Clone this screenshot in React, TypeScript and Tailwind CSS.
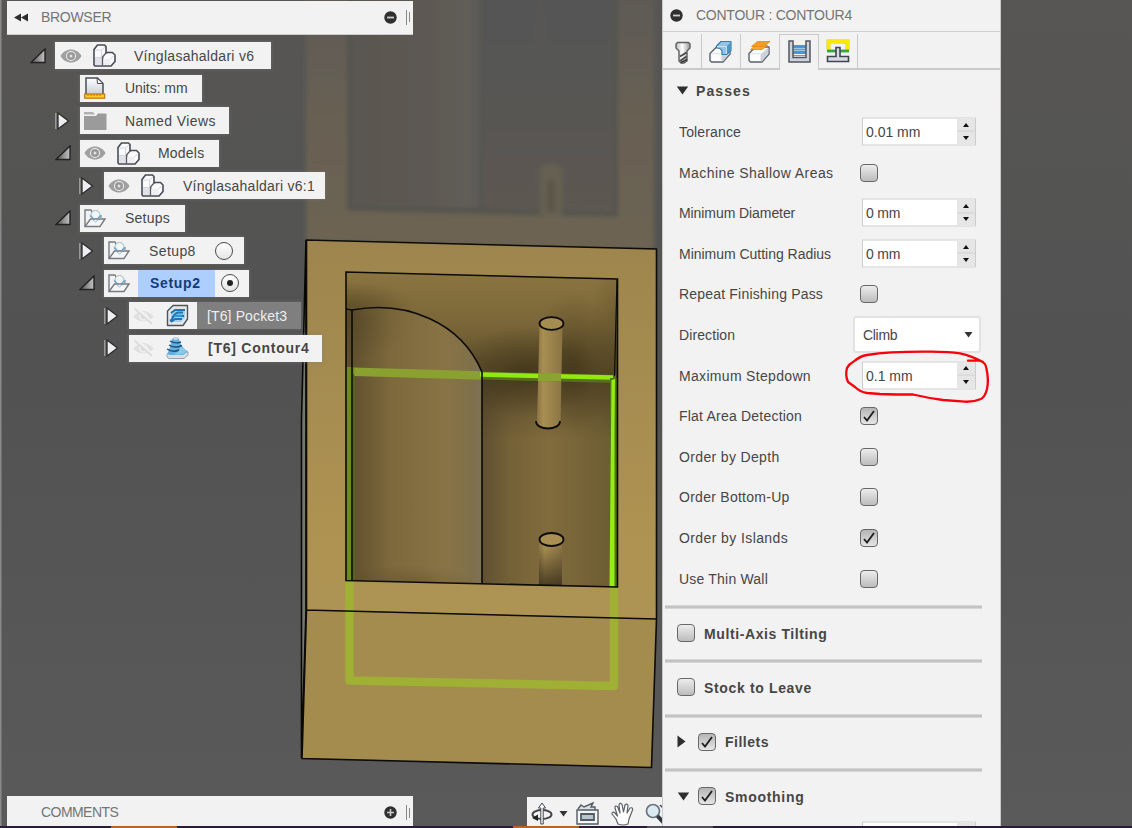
import React from "react";

/* ---------- small icons ---------- */

function Eye({ off = false }: { off?: boolean }) {
  if (off) {
    return (
      <svg width="23" height="20" viewBox="0 0 23 20" fill="none" stroke="#dcdcdc">
        <path d="M2 10.5C6 4.500 16 4 21 10.5C17 16 7 16.500 2 10.500Z" fill="#e0e0e0" strokeWidth="1" />
        <circle cx="11.500" cy="10.500" r="3.500" fill="#dcdcdc" stroke="#f2f2f2" strokeWidth="1.500" />
        <path d="M4 2L21 17" stroke="#f2f2f2" strokeWidth="3" />
        <path d="M2.500 2.500L20 18" strokeWidth="2" />
      </svg>
    );
  }
  return (
    <svg width="22" height="16" viewBox="0 0 22 16">
      <path d="M.5 8C5 -.700 17 -.700 21.500 8C17 16.700 5 16.700 .5 8Z" fill="#a0a0a0" />
      <circle cx="11" cy="8" r="5" fill="#f2f2f2" />
      <circle cx="11" cy="8" r="4" fill="#989898" />
      <circle cx="11" cy="8" r="1.500" fill="#e0e0e0" />
    </svg>
  );
}

function Body() {
  return (
    <svg width="23" height="23" viewBox="0 0 23 23" strokeLinejoin="round">
      <path d="M1 5.500L4.500 1H11.500L13 2.500V9L14.500 8.500H19.500L22 11V17.500L18 22H2L1 21Z" fill="#fbfbfd" stroke="#484b54" strokeWidth="1.600" />
      <path d="M2 14H9V21H2Z" fill="#e2e3ea" />
      <path d="M10.500 15H17.500V21H10.500Z" fill="#eeeef3" />
      <path d="M2 6H8.500V13.500H2M8.500 6L12 3M17.500 15L21 11.500" fill="none" stroke="#d4d6de" />
      <path d="M13 9L9.500 13V21.500M9.500 14H10.500" fill="none" stroke="#5a5d66" strokeWidth="1.300" />
    </svg>
  );
}

function UnitsDoc() {
  return (
    <svg width="22" height="22" viewBox="0 0 22 22">
      <defs>
        <linearGradient id="doc" x1="0" y1="0" x2="0" y2="1">
          <stop offset="0" stopColor="#fff" />
          <stop offset="1" stopColor="#cdd0da" />
        </linearGradient>
      </defs>
      <path d="M2 17V1H13.500L19 6.500V17" fill="url(#doc)" stroke="#4b4e58" strokeWidth="1.500" />
      <path d="M13 1L13.500 6.500H19Z" fill="#fff" stroke="#4b4e58" />
      <rect x=".7" y="17" width="20" height="4.200" fill="#f9c92e" stroke="#c07a08" strokeWidth="1.200" />
      <path d="M4 17V19M7 17V19M10 17V19M13 17V19M16 17V19" stroke="#c07a08" />
    </svg>
  );
}

function GrayFolder() {
  return (
    <svg width="23" height="18" viewBox="0 0 23 18" fill="#9b9b9b">
      <path d="M0 0H9L11 2.500H0Z" fill="#b1b1b1" />
      <path d="M0 4H12L14 1.500H22.500V18H0Z" />
    </svg>
  );
}

function SetupFolder() {
  return (
    <svg width="22" height="19" viewBox="0 0 22 19" fill="none">
      <path d="M1 17V1H7L8 3" stroke="#777b80" strokeWidth="1.400" />
      <path d="M17 6V9" stroke="#777b80" />
      <circle cx="11.500" cy="6" r="4.500" fill="#f1f6f9" stroke="#a3b3bd" />
      <path d="M6 6.500L9 9M17 6.500L14 9" stroke="#64a9d4" strokeWidth="1.600" />
      <path d="M1 17.500L6.500 10H21L16 17.500Z" fill="#f6f6f6" stroke="#777b80" strokeWidth="1.400" />
      <path d="M9 11L11.500 13L14 11" stroke="#8cc0df" />
    </svg>
  );
}

function PocketIcon() {
  return (
    <svg width="23" height="23" viewBox="0 0 23 23" strokeLinejoin="round">
      <path d="M1.500 7L7 1.500H21.500V15L17 21.500H1.500Z" fill="#e4e6e9" stroke="#4c535b" strokeWidth="1.400" />
      <path d="M5 18V9L9 5H19V14L15 18Z" fill="#a9cfe8" />
      <path d="M5 9L9 6H19M4 17C8 15 7 9 12 8.500H17M6 13L9 12H18M5 18L9 15H16" fill="none" stroke="#1f75b3" strokeWidth="2" />
      <path d="M9 10.500H17L15 13H8Z" fill="#3a97d1" />
    </svg>
  );
}

function ContourIcon() {
  return (
    <svg width="23" height="22" viewBox="0 0 23 22">
      <path d="M1 17L5 14H17L22 15V18L18 21.500H3L1 20Z" fill="#dcdee0" stroke="#9fa2a6" />
      <path d="M1.500 16C4 12 5 5 6 2Q9.500 -.8 13 2C14 6 15 10 22 14.500L17 18H3Z" fill="#62afe0" />
      <path d="M14 9L21 14L17 17Q11 18 8 17Q14 15 14 9Z" fill="#8cc8ea" />
      <path d="M4 4C8 6.500 11 6.500 15 5M3 8C7 10.500 12 10.500 16 8.500M1 12C5 14.500 10 14.500 13 13" fill="none" stroke="#1f4f74" strokeWidth="1.400" />
      <path d="M7.500 2H11.500" stroke="#d3dde3" strokeWidth="1.800" />
    </svg>
  );
}

function Twisty({ open }: { open: boolean }) {
  return open ? (
    <svg width="16" height="16" viewBox="0 0 16 16">
      <defs>
        <linearGradient id="tw" x1="0" x2="1">
          <stop offset="0" stopColor="#555" />
          <stop offset="1" stopColor="#c4c4c4" />
        </linearGradient>
      </defs>
      <path d="M1 14.500L15 1V14.500Z" fill="url(#tw)" stroke="#222" strokeWidth="1.400" />
    </svg>
  ) : (
    <svg width="16" height="20" viewBox="0 0 16 20">
      <path d="M.8 2V18" stroke="#aaa" strokeWidth="1.200" />
      <path d="M3 2L13.500 10L3 18Z" fill="#eeeef2" stroke="#2c2c2c" strokeWidth="1.300" />
    </svg>
  );
}

function Radio({ on }: { on?: boolean }) {
  return (
    <span className="flex size-[18px] items-center justify-center rounded-full border-[1.5px] border-[#4a4a4a] bg-linear-to-b from-white to-[#e6e6e6]">
      {on && <span className="size-[6px] rounded-full bg-[#222]" />}
    </span>
  );
}

function Round({ plus }: { plus?: boolean }) {
  return (
    <svg width="13" height="13" viewBox="0 0 13 13">
      <circle cx="6.500" cy="6.500" r="6.200" fill="#303030" />
      <path d={plus ? "M3 6.500H10M6.500 3V10" : "M3 6.500H10"} stroke="#ccc" strokeWidth={plus ? 1.6 : 1.8} />
    </svg>
  );
}

/* ---------- tree ---------- */

function Row({ open, pad, width, children }: { open?: boolean; pad: string; width: string; children: React.ReactNode }) {
  return (
    <div className={`flex h-[32.5px] items-center ${pad}`}>
      <span className="flex w-[25px] shrink-0">{open !== undefined && <Twisty open={open} />}</span>
      <div className={`flex h-[27px] items-center bg-[#f2f2f2] shadow-[0_0_3px_1px_rgba(125,125,125,0.35)] ${width}`}>{children}</div>
    </div>
  );
}

function Slot({ w, children }: { w: string; children: React.ReactNode }) {
  return <span className={`flex shrink-0 ${w}`}>{children}</span>;
}

function Tree() {
  return (
    <div className="mt-[5px] flex flex-col whitespace-nowrap text-[14px] leading-none text-[#464646]">
      <Row open pad="pl-[23px]" width="w-[216px] pl-[5px]">
        <Slot w="w-[33px]"><Eye /></Slot>
        <Slot w="w-[41px]"><Body /></Slot>
        <span className="tracking-[0.28px]">Vínglasahaldari v6</span>
      </Row>
      <Row pad="pl-[48px]" width="w-[122px] pl-[4px]">
        <Slot w="w-[41px]"><UnitsDoc /></Slot>
        <span className="tracking-[-0.05px]">Units: mm</span>
      </Row>
      <Row open={false} pad="pl-[48px]" width="w-[149px] pl-[4px]">
        <Slot w="w-[41px]"><GrayFolder /></Slot>
        <span className="tracking-[0.45px]">Named Views</span>
      </Row>
      <Row open pad="pl-[48px]" width="w-[139px] pl-[4px]">
        <Slot w="w-[33px]"><Eye /></Slot>
        <Slot w="w-[41px]"><Body /></Slot>
        <span className="tracking-[0.2px]">Models</span>
      </Row>
      <Row open={false} pad="pl-[72px]" width="w-[221px] pl-[4px]">
        <Slot w="w-[33px]"><Eye /></Slot>
        <Slot w="w-[42px]"><Body /></Slot>
        <span className="tracking-[0.26px]">Vínglasahaldari v6:1</span>
      </Row>
      <Row open pad="pl-[48px]" width="w-[105px] pl-[4px]">
        <Slot w="w-[41px]"><SetupFolder /></Slot>
        <span className="tracking-[0.25px]">Setups</span>
      </Row>
      <Row open={false} pad="pl-[72px]" width="w-[140px] pl-[4px]">
        <Slot w="w-[41px]"><SetupFolder /></Slot>
        <span className="w-[66px] tracking-[0.4px]">Setup8</span>
        <Radio />
      </Row>
      <Row open pad="pl-[72px]" width="w-[145px] pl-[4px]">
        <Slot w="w-[30px]"><SetupFolder /></Slot>
        <span className="mr-[6px] flex h-full w-[77px] items-center bg-[#accfff] pl-[12px] font-bold tracking-[0.65px] text-[#123c7c]">Setup2</span>
        <Radio on />
      </Row>
      <Row open={false} pad="pl-[97px]" width="w-[172px] pl-[3px]">
        <Slot w="w-[34px]"><Eye off /></Slot>
        <Slot w="w-[31px]"><PocketIcon /></Slot>
        <span className="flex h-full flex-1 items-center bg-[#7f7f7f] pl-[10px] tracking-[0.13px] text-[#eee]">[T6] Pocket3</span>
      </Row>
      <Row open={false} pad="pl-[97px]" width="w-[193px] pl-[3px]">
        <Slot w="w-[34px]"><Eye off /></Slot>
        <Slot w="w-[42px]"><ContourIcon /></Slot>
        <span className="font-bold tracking-[0.75px]">[T6] Contour4</span>
      </Row>
    </div>
  );
}

/* ---------- dialog controls ---------- */

function Check({ on }: { on?: boolean }) {
  return (
    <span
      className={`flex h-[18px] w-[18px] shrink-0 items-center justify-center rounded-[4px] border-[1.5px] border-[#686868] bg-linear-to-b ${
        on ? "from-[#b5b5b5] to-[#e6e6e6]" : "from-[#ededed] to-[#bcbcbc]"
      }`}
    >
      {on && (
        <svg width="14" height="14" viewBox="0 0 14 14" fill="none" stroke="#1c1c1c" strokeWidth="1.800">
          <path d="M2 8L5 11.500L12 2" />
        </svg>
      )}
    </span>
  );
}

function Spin({ value, track }: { value: string; track: string }) {
  return (
    <div className="ml-[2px] flex h-[28px] w-[114px] -translate-y-[0.5px] border border-[#cdcdcd] bg-white">
      <span className={`flex flex-1 items-center pl-[3px] ${track}`}>{value}</span>
      <span className="flex w-[18px] flex-col bg-[#e6e6e6]">
        <span className="flex flex-1 items-center justify-center border-b border-[#d2d2d2]">
          <svg width="6" height="5" viewBox="0 0 6 5"><path d="M0 4.500L3 .5L6 4.500Z" fill="#111" /></svg>
        </span>
        <span className="flex flex-1 items-center justify-center">
          <svg width="6" height="5" viewBox="0 0 6 5"><path d="M0 .5L3 4.500L6 .5Z" fill="#111" /></svg>
        </span>
      </span>
    </div>
  );
}

type Param = { label: string; track: string; value?: string; vtrack?: string; on?: boolean; select?: string };

const params: Param[] = [
  { label: "Tolerance", track: "tracking-[0.15px]", value: "0.01 mm", vtrack: "tracking-[-0.02px]" },
  { label: "Machine Shallow Areas", track: "tracking-[0.43px]" },
  { label: "Minimum Diameter", track: "tracking-[-0.08px]", value: "0 mm", vtrack: "tracking-[-0.2px]" },
  { label: "Minimum Cutting Radius", track: "tracking-[-0.02px]", value: "0 mm", vtrack: "tracking-[-0.2px]" },
  { label: "Repeat Finishing Pass", track: "tracking-[0.19px]" },
  { label: "Direction", track: "tracking-[0.1px]", select: "Climb" },
  { label: "Maximum Stepdown", track: "tracking-[0.32px]", value: "0.1 mm", vtrack: "tracking-[0px]" },
  { label: "Flat Area Detection", track: "tracking-[0.21px]", on: true },
  { label: "Order by Depth", track: "tracking-[0.35px]" },
  { label: "Order Bottom-Up", track: "tracking-[0.27px]" },
  { label: "Order by Islands", track: "tracking-[0.4px]", on: true },
  { label: "Use Thin Wall", track: "tracking-[0.2px]" },
];

function ParamRow({ p }: { p: Param }) {
  return (
    <div className="flex h-[40.6px] items-center pl-[16px]">
      <span className={`w-[181px] shrink-0 ${p.track}`}>{p.label}</span>
      {p.value ? (
        <Spin value={p.value} track={p.vtrack ?? ""} />
      ) : p.select ? (
        <div className="-ml-[7px] flex h-[37px] w-[128px] items-center justify-between rounded-[3px] border-2 border-[#e2e2e2] bg-white pr-[6px] pl-[8px] tracking-[-0.3px]">
          {p.select}
          <svg width="9" height="6" viewBox="0 0 9 6"><path d="M.5 0H8.500L4.500 5.500Z" fill="#333" /></svg>
        </div>
      ) : (
        <Check on={p.on} />
      )}
    </div>
  );
}

function Caret({ open }: { open: boolean }) {
  return (
    <svg width="13" height="13" viewBox="0 0 13 13">
      <path d={open ? "M.8 2.500H12.200L6.500 10.500Z" : "M.5 .5L8.500 6.500L.5 12.500Z"} fill="#2e2e2e" />
    </svg>
  );
}

function Section({ label, track, open, on }: { label: string; track: string; open?: boolean; on?: boolean }) {
  return (
    <div className="h-[54.3px]">
      <div className="ml-[2px] h-[4px] w-[317px] border-y-[0.5px] border-[#d6d6d6] bg-[#c3c3c3]" />
      <div className="flex h-[48px] items-center pl-[13.500px] font-bold">
        {open !== undefined && <span className="flex w-[21px]"><Caret open={open} /></span>}
        <Check on={on} />
        <span className={`ml-[9.500px] pt-px ${track}`}>{label}</span>
      </div>
    </div>
  );
}

function ToolTab() {
  return (
    <svg width="16" height="23" viewBox="0 0 16 23">
      <defs>
        <linearGradient id="tool" x1="0" x2="1">
          <stop offset="0" stopColor="#bbb" />
          <stop offset=".45" stopColor="#fff" />
          <stop offset="1" stopColor="#999" />
        </linearGradient>
      </defs>
      <path d="M2.500 1.500H13.500L15 3V7L12 10V20L9 22H6L4 20V10L1 7V3Z" fill="url(#tool)" stroke="#5e5e5e" strokeWidth="1.400" />
      <path d="M5 15.500L11.500 11.500M5 20L11.500 15.500" stroke="#4a4a4a" strokeWidth="2" />
      <path d="M6 21.500L12 18.500" stroke="#333" strokeWidth="1.800" />
    </svg>
  );
}

function BoxTab({ orange }: { orange?: boolean }) {
  return (
    <svg className="-translate-x-px" width="23" height="23" viewBox="0 0 23 23" strokeLinejoin="round">
      <path d="M1 13.500L7.500 7H21V14L14 22H2.500L1 20.500Z" fill="#fcfcfd" stroke="#5b606b" strokeWidth="1.400" />
      <path d="M12.500 21.200V14.500L20.300 7.500V14L14 21.200Z" fill="#cfd1da" />
      <path d="M2 13.800H12.500" stroke="#dfe0e6" />
      {orange ? (
        <>
          <path d="M2.500 9.500L8 5.500H19.500L14 9.500Z" fill="#f7a733" stroke="#e5860c" strokeWidth=".8" />
          <path d="M3.500 6.500L9.500 1.500H22L16 6.500Z" fill="#f59c24" stroke="#e5860c" strokeWidth=".8" />
        </>
      ) : (
        <>
          <path d="M7.500 6L12 1.500H22V10.500L17.500 14.500H13V11.500Q12.500 8 7.500 8Z" fill="#8fc5ea" stroke="#367eae" strokeWidth="1.200" />
          <path d="M17.500 14V6.500L21.500 2.500V10.500Z" fill="#4b95c9" />
          <path d="M8 6.500H17.500V14" fill="none" stroke="#c7e2f4" />
        </>
      )}
    </svg>
  );
}

function PassTab() {
  return (
    <svg width="23" height="23" viewBox="0 0 23 23">
      <path d="M5 5H18V8.500H5ZM5 10.500H18V14H5Z" fill="#4f93d6" />
      <path d="M5 9.500H18M5 15.500H18" stroke="#6f7c8b" strokeWidth=".8" />
      <path d="M1 1H5V17.500H18V1H22V22H1Z" fill="#cfd1dc" stroke="#50555f" strokeWidth="1.500" />
    </svg>
  );
}

function LinkTab() {
  return (
    <svg width="24" height="24" viewBox="0 0 24 24" fill="none">
      <path d="M2.500 11V2.500H21.500V11" stroke="#d9cd20" strokeWidth="4" />
      <path d="M2.500 11V2.500H21.500V11" stroke="#f8ea00" strokeWidth="3" />
      <path d="M1 12H23" stroke="#35a548" strokeWidth="2.800" />
      <path d="M10 8.500H14V17.500H22.500V22.500H1.500V17.500H10Z" fill="#d8dae2" stroke="#3f4650" strokeWidth="1.600" />
    </svg>
  );
}

function Dialog() {
  return (
    <div className="flex h-[826px] w-[339px] shrink-0 flex-col overflow-hidden whitespace-nowrap border-x border-[#c9c9c9] bg-[#f2f2f2] text-[14px] leading-none text-[#464646]">
      <div className="flex h-[32px] shrink-0 items-center border-b border-[#cfcfcf] pb-px pl-[7px] text-[#757575]">
        <Round />
        <span className="ml-[13px] tracking-[-0.25px]">CONTOUR : CONTOUR4</span>
      </div>
      <div className="flex h-[38px] shrink-0 items-stretch pt-[2px]">
        <span className="flex w-[38px] items-center justify-center border-b-2 border-[#cacaca] pt-[3px] pl-px"><ToolTab /></span>
        <span className="flex w-[39px] items-center justify-center border-b-2 border-l border-[#cacaca]"><BoxTab /></span>
        <span className="flex w-[39px] items-center justify-center border-b-2 border-l border-[#cacaca]"><BoxTab orange /></span>
        <span className="flex w-[40px] items-center justify-center border-x-[1.5px] border-t-[1.5px] border-[#cacaca] pb-[3px]"><PassTab /></span>
        <span className="flex w-[39px] items-center justify-center border-r border-b-2 border-[#cacaca]"><LinkTab /></span>
        <span className="flex-1 border-b-2 border-[#cacaca]" />
      </div>
      <div className="flex h-[41.7px] shrink-0 items-center pl-[13px] font-bold">
        <Caret open />
        <span className="ml-[7px] pt-px tracking-[1.1px]">Passes</span>
      </div>
      <div className="shrink-0">
        {params.map((p) => <ParamRow key={p.label} p={p} />)}
      </div>
      <div className="mt-[6.300px] shrink-0">
        <Section label="Multi-Axis Tilting" track="tracking-[0.6px]" />
        <Section label="Stock to Leave" track="tracking-[0.65px]" />
        <Section label="Fillets" track="tracking-[0.5px]" open={false} on />
        <Section label="Smoothing" track="tracking-[0.7px]" open on />
      </div>
      <div className="flex pl-[197px]"><Spin value="" track="" /></div>
    </div>
  );
}

/* ---------- viewport drawing ---------- */

function Scene() {
  return (
    <svg className="absolute inset-0" width="1132" height="828" viewBox="0 0 1132 828">
      <defs>
        <linearGradient id="bg" x1="0" y1="0" x2="0" y2="1">
          <stop offset="0" stopColor="#575655" /><stop offset=".45" stopColor="#525252" /><stop offset="1" stopColor="#5a5a5a" />
        </linearGradient>
        <linearGradient id="ghost" x1="0" y1="0" x2="0" y2="1">
          <stop offset="0" stopColor="#5e5a56" /><stop offset=".5" stopColor="#686053" /><stop offset="1" stopColor="#6d6452" />
        </linearGradient>
        <linearGradient id="ghostL" x1="0" x2="1">
          <stop offset="0" stopColor="#5a5751" /><stop offset=".6" stopColor="#5d5952" /><stop offset=".9" stopColor="#605e5a" /><stop offset="1" stopColor="#5a5956" />
        </linearGradient>
        <linearGradient id="ghostR" x1="0" y1="0" x2="0" y2="1">
          <stop offset="0" stopColor="#545556" /><stop offset="1" stopColor="#5d5851" />
        </linearGradient>
        <linearGradient id="face" x1="0" y1="0" x2="0" y2="1">
          <stop offset="0" stopColor="#9d854d" /><stop offset=".75" stopColor="#ad9252" /><stop offset="1" stopColor="#ae9454" />
        </linearGradient>
        <linearGradient id="wall" x1="0" y1="272" x2="0" y2="376" gradientUnits="userSpaceOnUse">
          <stop offset="0" stopColor="#8b7541" /><stop offset=".5" stopColor="#7a6638" /><stop offset="1" stopColor="#5a4b2a" />
        </linearGradient>
        <linearGradient id="curve" x1="350" x2="482" y1="0" y2="0" gradientUnits="userSpaceOnUse">
          <stop offset="0" stopColor="#5f4f2e" /><stop offset=".3" stopColor="#7c683b" /><stop offset=".7" stopColor="#887345" /><stop offset=".92" stopColor="#807049" /><stop offset="1" stopColor="#7c7158" />
        </linearGradient>
        <linearGradient id="floor" x1="482" x2="616" y1="0" y2="0" gradientUnits="userSpaceOnUse">
          <stop offset="0" stopColor="#5e5030" /><stop offset=".2" stopColor="#736137" /><stop offset=".5" stopColor="#816c3d" /><stop offset="1" stopColor="#6b5c32" />
        </linearGradient>
        <linearGradient id="floorTop" x1="0" y1="376" x2="0" y2="440" gradientUnits="userSpaceOnUse">
          <stop offset="0" stopColor="#443820" stopOpacity=".6" /><stop offset="1" stopColor="#443820" stopOpacity="0" />
        </linearGradient>
        <linearGradient id="pin" x1="0" x2="1">
          <stop offset="0" stopColor="#8a7443" /><stop offset=".25" stopColor="#a88e51" /><stop offset="1" stopColor="#8a7445" />
        </linearGradient>
        <linearGradient id="pin2" x1="0" y1="0" x2="0" y2="1">
          <stop offset="0" stopColor="#352b18" stopOpacity="0" /><stop offset="1" stopColor="#352b18" stopOpacity=".9" />
        </linearGradient>
        <radialGradient id="shade">
          <stop offset="0" stopColor="#30270f" stopOpacity=".6" /><stop offset="1" stopColor="#30270f" stopOpacity="0" />
        </radialGradient>
        <filter id="soft" x="-10%" y="-10%" width="120%" height="120%"><feGaussianBlur stdDeviation="2.200" /></filter>
        <clipPath id="pocket"><path d="M346 272L617 279V587L346 580Z" /></clipPath>
      </defs>
      <rect width="1132" height="828" fill="url(#bg)" />
      <rect width="1.500" height="828" fill="#8a8a8a" />

      <g filter="url(#soft)">
        <path d="M306 -9H654V250L306 241Z" fill="url(#ghost)" />
        <path d="M347 -9H618V217L347 211Z" fill="#55544f" />
        <path d="M352 -9H481V208L352 206Z" fill="url(#ghostL)" />
        <path d="M484 -9H613V212L484 208Z" fill="url(#ghostR)" />
        <path d="M539 -9H542V50H539Z" fill="#5c5952" />
        <path d="M540 168Q551 160 562 168V216H540Z" fill="#656051" />
        <path d="M547 180H555V212H547Z" fill="#5b574a" />
      </g>

      <path d="M306 240L301.500 420V758L306 610Z" fill="#777772" stroke="#080808" strokeWidth="1.600" />
      <path d="M306.500 240L656.500 249V619L306.500 610Z" fill="url(#face)" />
      <path d="M306.500 610.500L656.500 619L651.500 767.500L302 758.500Z" fill="#a48b4e" />

      <g clipPath="url(#pocket)">
        <rect x="346" y="270" width="272" height="110" fill="url(#wall)" />
        <path d="M482 375L617 378V590H482Z" fill="url(#floor)" />
        <rect x="482" y="376" width="136" height="64" fill="url(#floorTop)" />
        <ellipse cx="525" cy="372" rx="75" ry="45" fill="url(#shade)" opacity=".9" />
        <ellipse cx="574" cy="362" rx="42" ry="70" fill="url(#shade)" opacity=".65" />
        <ellipse cx="350" cy="305" rx="65" ry="24" fill="url(#shade)" opacity=".5" />
        <ellipse cx="620" cy="345" rx="32" ry="95" fill="url(#shade)" opacity=".45" />
        <path d="M346 309L352 310C406 300 461 322 482 372V584L346 580Z" fill="url(#curve)" />
        <ellipse cx="355" cy="322" rx="55" ry="38" fill="url(#shade)" opacity=".3" />
        <ellipse cx="408" cy="583" rx="65" ry="18" fill="url(#shade)" opacity=".35" />
        <path d="M539.500 324L562.500 325L560.500 424Q548 432 537 424Z" fill="url(#pin)" />
        <path d="M539 540H562V590H539Z" fill="url(#pin)" />
        <path d="M539 547H562V590H539Z" fill="url(#pin2)" />
      </g>

      <g fill="none">
        <path d="M345.500 371.500L482 375.500" stroke="#8aa130" strokeWidth="8.500" />
        <path d="M482 375.500L616 379" stroke="#5b7a1b" strokeWidth="8" opacity=".8" />
        <path d="M480 374.500L613 377.500" stroke="#91e910" strokeWidth="4.500" />
        <path d="M538 377.200H561" stroke="#8ba431" strokeWidth="8" />
        <path d="M350 368V580" stroke="#6e8b23" strokeWidth="8.500" />
        <path d="M353.500 374V580" stroke="#4e661b" strokeWidth="1.500" />
        <path d="M614 378V587" stroke="#55751a" strokeWidth="8" />
        <path d="M611.500 380L615 379L614.500 430V587H609.500Z" fill="#94ed13" />
        <path d="M349.500 582V680.500L614 686V588" stroke="#9fb035" strokeWidth="8.500" strokeLinejoin="round" />
      </g>

      <g fill="none" stroke="#0c0b08" strokeWidth="1.600">
        <path d="M306.500 610V240L656.500 249V619L651.500 767.500L302 758.500L306.500 610L656.500 619" />
        <path d="M617.500 279L346 272V580.500L617.500 587Z" />
        <path d="M617 280L614.500 376" strokeWidth="1.200" />
        <path d="M346 309L352 310C406 300 461 322 482 372V584M352 310V580" />
        <ellipse cx="551.500" cy="323.500" rx="12" ry="6.300" fill="#a58c50" strokeWidth="1.800" />
        <ellipse cx="551.500" cy="539.500" rx="12" ry="6.500" fill="#aa9052" strokeWidth="1.800" />
        <path d="M536 421C536 431 560 431 560 421" strokeWidth="1.800" />
      </g>
    </svg>
  );
}

function NavBar() {
  return (
    <div className="flex h-[29px] w-[135px] items-center overflow-hidden bg-[#f2f2f2] pt-[4px] pl-[4px]">
      <svg className="shrink-0" width="22" height="24" viewBox="0 0 22 24" fill="none" stroke="#42474e">
        <ellipse cx="11" cy="12.500" rx="9.500" ry="4.500" strokeWidth="2" />
        <path d="M9.800 22V6H7.500L11 1L14.500 6H12.200V22Z" fill="#fff" />
        <path d="M1 16L7 12.500V19Z" fill="#222" stroke="none" />
      </svg>
      <svg className="ml-[6px] shrink-0" width="9" height="6" viewBox="0 0 9 6"><path d="M.5 0H8.500L4.500 5.500Z" fill="#333" /></svg>
      <svg className="ml-[8px] shrink-0" width="23" height="23" viewBox="0 0 23 23" fill="none" stroke="#525b65" strokeWidth="1.400">
        <path d="M2 7L5 3L8 5L17 1L15 5H19V8" fill="#dce1e5" />
        <path d="M1 8H22V22H1Z" fill="#f5f5f5" />
        <path d="M5 12H18V18H5Z" fill="#b8c4cc" strokeWidth="1.800" />
      </svg>
      <svg className="ml-[12px] shrink-0" width="24" height="24" viewBox="0 0 24 24" fill="#fff" stroke="#5b6269" strokeWidth="1.200" strokeLinejoin="round">
        <path d="M7 22L5 17L1 12Q1 9 4 11L6.500 14L4 6Q4 3 6.500 4.500L9 11L8 3Q9 0 11 2.500L12.500 10L14 3Q16 1 17 3.500L16 11L19 6Q22 5 21.500 8L18 17L17 22Q12 24 7 22Z" />
      </svg>
      <svg className="ml-[10px] shrink-0" width="23" height="23" viewBox="0 0 23 23" fill="none">
        <circle cx="8" cy="9" r="6.500" fill="#dbeaf0" stroke="#687480" strokeWidth="1.700" />
        <path d="M12.500 14L19 21" stroke="#303640" strokeWidth="4" />
        <path d="M15 3L19 7" stroke="#42474e" strokeWidth="1.500" />
      </svg>
    </div>
  );
}

function Grip() {
  return (
    <span className="flex items-center gap-[2px]">
      <span className="h-[15px] w-px bg-[#888]" />
      <span className="h-[10px] w-px bg-[#888]" />
    </span>
  );
}

export default function App() {
  return (
    <div className="relative flex h-[828px] w-[1132px] flex-col overflow-hidden bg-[#555] font-['Liberation_Sans',Arial,sans-serif]">
      <Scene />
      <div className="relative flex h-[826px]">
        <div className="flex w-[520px] shrink-0 flex-col pt-px pl-[7px]">
          <div className="flex h-[33.5px] w-[406px] items-center border-b border-[#ccc] bg-[#f2f2f2] pr-[3px] pl-[7px] text-[14px] text-[#757575]">
            <svg width="14" height="9" viewBox="0 0 14 9"><path d="M7 .5V8.500L0 4.500ZM14 .5V8.500L7 4.500Z" fill="#2d2d2d" /></svg>
            <span className="ml-[13px] flex-1 tracking-[-0.3px]">BROWSER</span>
            <span className="mr-[9px]"><Round /></span>
            <Grip />
          </div>
          <Tree />
          <div className="mt-auto flex h-[30px] w-[406px] items-center bg-[#f2f2f2] pt-[3px] pr-[3px] pl-[34px] text-[14px] text-[#757575]">
            <span className="flex-1 tracking-[-0.55px]">COMMENTS</span>
            <span className="mr-[9px]"><Round plus /></span>
            <Grip />
          </div>
        </div>
        <div className="flex w-[142px] shrink-0 items-end pl-[7px]"><NavBar /></div>
        <Dialog />
      </div>
      <div className="relative flex h-[2px] bg-[#2a1b3a]">
        <span className="ml-[111px] w-[66px] bg-[#b9622c]" />
        <span className="ml-[336px] w-[66px] bg-[#b9622c]" />
        <span className="ml-[68px] w-[66px] bg-[#55505e]" />
      </div>
      <svg className="absolute top-[345px] left-[840px]" width="155" height="65" viewBox="840 345 155 65" fill="none" stroke="#f8000c" strokeWidth="2.300" strokeLinecap="round" strokeLinejoin="round">
        <path d="M968 360.700L979 360.500Q986 362 986.500 369Q989 380 987 389Q985 397 981 399Q974 402 965 401.700L943 400Q928 398 913 394.500Q895 394.500 880 394L867 393Q860 392 855 387L848 382Q845 375 847 368Q849 364 853 362Q860 356 867 355Q890 351.500 927 351.700Q948 351.500 960 353.300Q972 356 983 362" />
      </svg>
    </div>
  );
}
